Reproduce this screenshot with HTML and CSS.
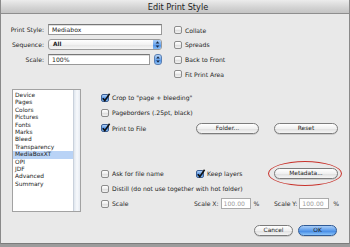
FILE: index.html
```html
<!DOCTYPE html>
<html>
<head>
<meta charset="utf-8">
<link rel="stylesheet" href="styles.css">
</head>
<body>
<div class="window">
  <div class="titlebar">Edit Print Style</div>
  <div class="top">
    <div class="form">
      <span class="lbl">Print Style:</span>
      <div class="field">Mediabox</div>
      <span class="lbl">Sequence:</span>
      <div class="popup"><span class="ptext">All</span><span class="cap"><svg width="9" height="11" viewBox="0 0 9 11"><path d="M4.5 2.2 L6.3 4.4 L2.7 4.4 Z M4.5 8.8 L6.3 6.6 L2.7 6.6 Z" fill="#1a2a44"/></svg></span></div>
      <span class="lbl">Scale:</span>
      <div class="scalewrap"><div class="field short">100%</div><span class="stepper"><svg width="8" height="11" viewBox="0 0 8 11"><path d="M4 2.2 L5.8 4.4 L2.2 4.4 Z M4 8.8 L5.8 6.6 L2.2 6.6 Z" fill="#1a2a44"/></svg></span></div>
    </div>
    <div class="opts">
      <div class="opt"><span class="cb"></span>Collate</div>
      <div class="opt"><span class="cb"></span>Spreads</div>
      <div class="opt"><span class="cb"></span>Back to Front</div>
      <div class="opt"><span class="cb"></span>Fit Print Area</div>
    </div>
  </div>
  <div class="middle">
    <div class="list">
      <ul class="items">
        <li>Device</li>
        <li>Pages</li>
        <li>Colors</li>
        <li>Pictures</li>
        <li>Fonts</li>
        <li>Marks</li>
        <li>Bleed</li>
        <li>Transparency</li>
        <li class="sel">MediaBoxXT</li>
        <li>OPI</li>
        <li>JDF</li>
        <li>Advanced</li>
        <li>Summary</li>
      </ul>
      <div class="scroll"></div>
    </div>
    <div class="pane">
      <div class="row"><span class="cb on"><svg width="10" height="10" viewBox="0 0 10 10"><path d="M1.8 5.2 L3.8 7.6 L8.6 0.8" fill="none" stroke="#111" stroke-width="1.6"/></svg></span>Crop to "page + bleeding"</div>
      <div class="row"><span class="cb"></span>Pageborders (.25pt, black)</div>
      <div class="row r3">
        <div class="c1"><span class="cb on"><svg width="10" height="10" viewBox="0 0 10 10"><path d="M1.8 5.2 L3.8 7.6 L8.6 0.8" fill="none" stroke="#111" stroke-width="1.6"/></svg></span>Print to File</div>
        <div class="c2"><span class="btn folder">Folder...</span></div>
        <div class="c3"><span class="btn wide">Reset</span></div>
      </div>
      <div class="row r4">
        <div class="c1"><span class="cb"></span>Ask for file name</div>
        <div class="c2"><span class="cb on"><svg width="10" height="10" viewBox="0 0 10 10"><path d="M1.8 5.2 L3.8 7.6 L8.6 0.8" fill="none" stroke="#111" stroke-width="1.6"/></svg></span>Keep layers</div>
        <div class="c3 meta"><span class="btn wide">Metadata...</span><span class="ring"></span></div>
      </div>
      <div class="row"><span class="cb"></span>Distill (do not use together with hot folder)</div>
      <div class="row">
        <div class="c1"><span class="cb"></span>Scale</div>
        <div class="c2 sx"><span class="slbl">Scale X:</span><span class="num">100.00</span><span class="pct">%</span></div>
        <div class="c3 sy"><span class="slbl">Scale Y:</span><span class="num">100.00</span><span class="pct">%</span></div>
      </div>
    </div>
  </div>
  <div class="bottom">
    <span class="btn cancel">Cancel</span>
    <span class="btn ok">OK</span>
  </div>
</div>
</body>
</html>
```

FILE: styles.css
```css
* { box-sizing: border-box; }
html, body { margin: 0; padding: 0; }
body {
  width: 350px;
  height: 247px;
  background: #9c9c9c;
  font-family: "DejaVu Sans", sans-serif;
  font-size: 6.1px;
  color: #1c1c1c;
  overflow: hidden;
  white-space: nowrap;
}
.window {
  width: 350px;
  height: 244px;
  background: #e9e9e9;
  border-left: 1px solid #8a8a8a;
  border-right: 1px solid #8a8a8a;
  border-bottom: 1px solid #7c7c7c;
  display: flex;
  flex-direction: column;
}
.titlebar {
  height: 14px;
  flex: none;
  background: linear-gradient(#ececec, #d2d2d2 60%, #c4c4c4);
  border-bottom: 1px solid #8e8e8e;
  font-size: 8.2px;
  color: #222;
  display: flex;
  align-items: center;
  justify-content: center;
  padding-left: 6px;
  padding-top: 1px;
}
.top {
  height: 75px;
  flex: none;
  display: flex;
  align-items: flex-start;
}
.form {
  margin-top: 10px;
  display: grid;
  grid-template-columns: 43px 114px;
  grid-auto-rows: 11px;
  column-gap: 4px;
  row-gap: 4px;
  align-items: center;
}
.lbl { text-align: right; line-height: 11px; }
.field {
  height: 11px;
  background: #fff;
  border: 1px solid #999;
  border-top-color: #777;
  padding-left: 3px;
  line-height: 9px;
  box-shadow: inset 0 1px 0 #ddd;
}
.popup {
  height: 11px;
  border: 1px solid #9a9a9a;
  border-radius: 3px;
  background: linear-gradient(#ffffff, #f2f2f2 50%, #e4e4e4 51%, #f6f6f6);
  display: flex;
  align-items: center;
  overflow: hidden;
}
.ptext { flex: 1; padding-left: 4px; line-height: 9px; font-weight: bold; font-size: 5.8px; }
.cap {
  width: 9px;
  height: 11px;
  margin-right: -1px;
  border-radius: 0 3px 3px 0;
  background: linear-gradient(#b8d6f8, #6ea8ee 50%, #4b8ee6 51%, #8fc3f7);
  display: flex;
}
.scalewrap { display: flex; align-items: center; gap: 2px; }
.field.short { width: 104px; }
.stepper {
  width: 8px;
  height: 11px;
  border-radius: 3px;
  border: 1px solid #5a7fb3;
  background: linear-gradient(#b8d6f8, #6ea8ee 50%, #4b8ee6 51%, #8fc3f7);
  display: flex;
  align-items: center;
  justify-content: center;
  margin-left: 2px;
  overflow: hidden;
}
.stepper svg { flex: none; }
.opts {
  margin-top: 9px;
  margin-left: 12px;
  display: flex;
  flex-direction: column;
}
.opt {
  height: 14.67px;
  display: flex;
  align-items: center;
}
.cb {
  width: 8px;
  height: 8px;
  flex: none;
  border: 1px solid #8c8c8c;
  border-radius: 2px;
  background: linear-gradient(#ffffff, #ececec 50%, #dcdcdc 51%, #f2f2f2);
  margin-right: 3px;
  position: relative;
}
.cb.on {
  border-color: #3c5f94;
  background: linear-gradient(#b5d4f8, #5d9ae8 50%, #3d82e0 51%, #86bdf5);
}
.cb svg { position: absolute; left: -1px; top: -2px; }
.middle {
  height: 123px;
  flex: none;
  display: flex;
  align-items: flex-start;
}
.list {
  margin-left: 11px;
  width: 69px;
  height: 123px;
  border: 1px solid #a2a2a2;
  background: #fff;
  display: flex;
}
.items {
  list-style: none;
  margin: 0;
  padding: 2px 0 0 0;
  flex: 1;
  font-size: 5.9px;
}
.items li {
  height: 7.4px;
  line-height: 7.4px;
  padding-left: 2px;
}
.items li.sel { background: #b9d3f6; }
.scroll {
  width: 7px;
  flex: none;
  background: linear-gradient(90deg, #dfe6ee, #f7f9fc 50%, #e6ebf2);
  border-left: 1px solid #c9d1dc;
}
.pane {
  margin-left: 20px;
  padding-top: 1px;
  display: flex;
  flex-direction: column;
}
.row {
  height: 15px;
  display: flex;
  align-items: center;
}
.r3 { height: 16px; }
.r4 { margin-top: 30px; }
.c1 { width: 95px; flex: none; display: flex; align-items: center; }
.c2 { width: 78px; flex: none; display: flex; align-items: center; }
.c3 { width: 64px; flex: none; display: flex; align-items: center; }
.btn {
  height: 11px;
  border: 1px solid #7c7c7c;
  border-radius: 6px;
  background: linear-gradient(#ffffff, #f0f0f0 50%, #dedede 51%, #f5f5f5);
  display: flex;
  align-items: center;
  justify-content: center;
  font-size: 5.9px;
  line-height: 9px;
  box-shadow: 0 0.5px 0.5px rgba(0,0,0,0.25);
}
.folder { width: 63px; }
.wide { width: 64px; }
.meta { position: relative; }
.ring {
  position: absolute;
  left: -6px;
  top: -7px;
  width: 74px;
  height: 25px;
  border: 1.5px solid #c8332c;
  border-radius: 50%;
}
.sx { margin-left: -2px; width: 80px; }
.sy { width: auto; }
.slbl { margin-right: 2px; flex: none; }
.num {
  width: 30px;
  flex: none;
  height: 11px;
  background: #fff;
  border: 1px solid #aaa;
  color: #9a9a9a;
  padding-left: 2px;
  line-height: 9px;
}
.pct { margin-left: 3px; flex: none; }
.sy .pct { margin-left: 4px; }
.bottom {
  display: flex;
  justify-content: flex-end;
  gap: 5px;
  margin-top: 13px;
  padding-right: 12px;
}
.cancel { width: 39px; }
.ok {
  width: 39px;
  border-color: #2f5a96;
  background: linear-gradient(#a9cdf7, #5c9ceb 50%, #3b83e3 51%, #8cc4f8);
}
```
